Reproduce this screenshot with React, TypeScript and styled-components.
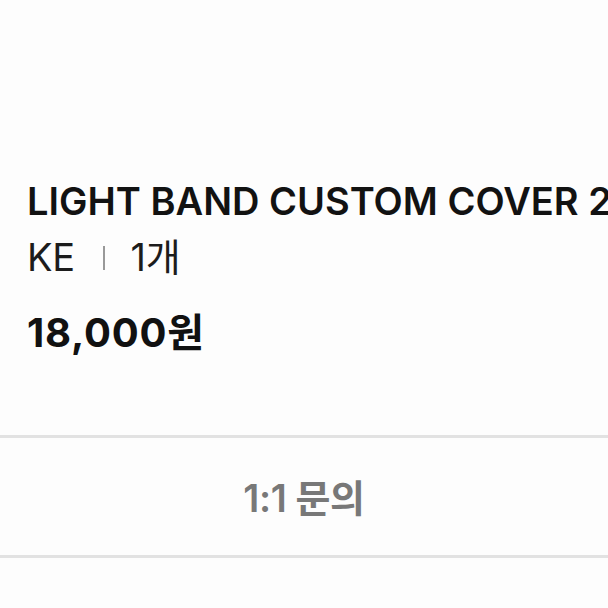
import styled, { createGlobalStyle } from "styled-components";

const GlobalStyle = createGlobalStyle`
  html, body {
    margin: 0;
    padding: 0;
    background-color: #fdfdfd;
  }
  body {
    font-family: Inter, "Noto Sans CJK KR", sans-serif;
  }
`

const Page = styled.div`
  width: 608px;
  height: 608px;
  overflow: hidden;
  background-color: #fdfdfd;
  display: flex;
  flex-direction: column;
`

const Info = styled.section`
  padding: 178px 0 0 27px;
  display: flex;
  flex-direction: column;
`

const Title = styled.h1`
  margin: 0;
  font-size: 38px;
  line-height: 46px;
  font-weight: 600;
  color: #121212;
  white-space: nowrap;
  letter-spacing: 0;
`

const Meta = styled.div`
  margin-top: 10px;
  display: flex;
  align-items: center;
  font-size: 38px;
  line-height: 46px;
  font-weight: 400;
  color: #1c1c1c;
  letter-spacing: -0.4px;
`

const Bar = styled.span`
  display: inline-block;
  width: 2px;
  height: 24px;
  margin: 2px 26px 0 28px;
  background-color: #999;
`

const Price = styled.div`
  margin-top: 30px;
  font-size: 40px;
  line-height: 46px;
  font-weight: 700;
  color: #111;
  letter-spacing: 0.8px;
`

const InquiryButton = styled.button`
  margin-top: 79px;
  height: 123px;
  border: none;
  border-top: 3px solid #e2e2e2;
  border-bottom: 3px solid #e2e2e2;
  background-color: #fdfdfd;
  font-family: Inter, "Noto Sans CJK KR", sans-serif;
  font-size: 38px;
  font-weight: 600;
  color: #787878;
  letter-spacing: -0.4px;
  cursor: pointer;
  padding: 0 0 2px;
`

const App = () => {
    return (
        <Page>
            <GlobalStyle />
            <Info>
                <Title>LIGHT BAND CUSTOM COVER 2</Title>
                <Meta>
                    KE
                    <Bar />
                    1개
                </Meta>
                <Price>18,000원</Price>
            </Info>
            <InquiryButton>1:1 문의</InquiryButton>
        </Page>
    )
}

export default App;
